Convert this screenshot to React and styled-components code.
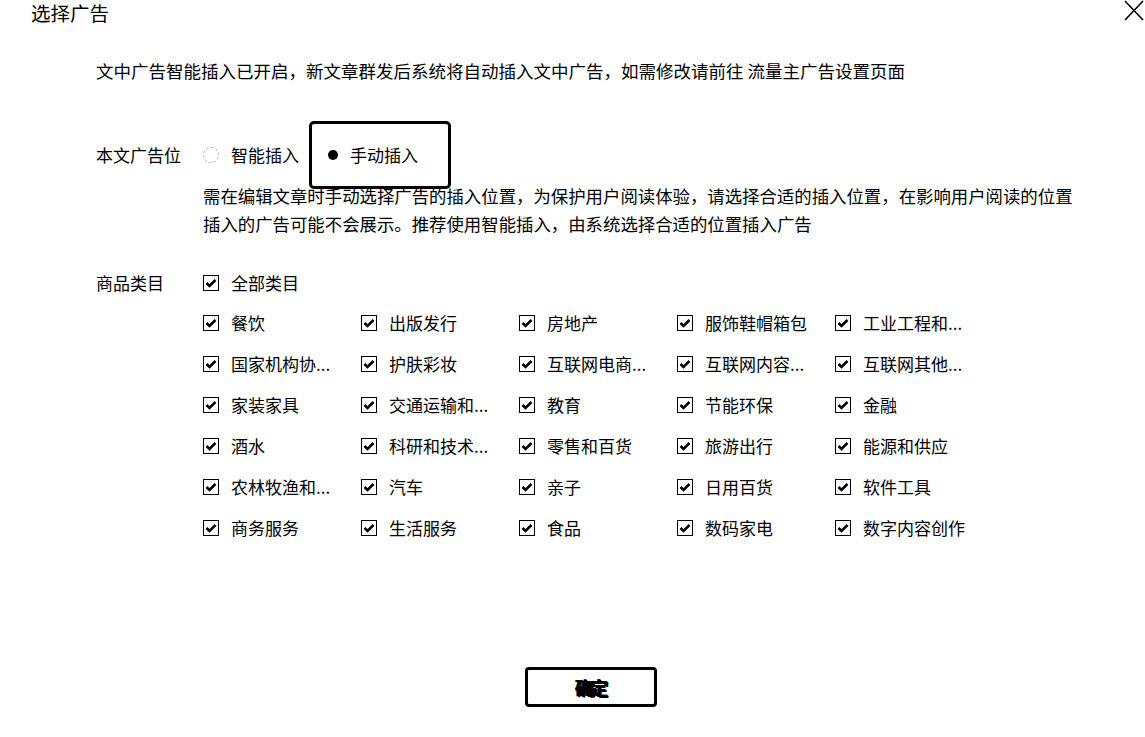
import React from 'react';
import styled, { createGlobalStyle } from 'styled-components';

const GlobalStyle = createGlobalStyle`
  html, body {
    margin: 0;
    padding: 0;
    background: #fff;
  }
  body {
    font-family: "Noto Sans CJK SC", "Noto Sans", sans-serif;
    color: #000;
  }
`;

// labels as shown in the list (long names are cut by the page)
const categories = [
  '餐饮', '出版发行', '房地产', '服饰鞋帽箱包', '工业工程和...',
  '国家机构协...', '护肤彩妆', '互联网电商...', '互联网内容...', '互联网其他...',
  '家装家具', '交通运输和...', '教育', '节能环保', '金融',
  '酒水', '科研和技术...', '零售和百货', '旅游出行', '能源和供应',
  '农林牧渔和...', '汽车', '亲子', '日用百货', '软件工具',
  '商务服务', '生活服务', '食品', '数码家电', '数字内容创作',
];

const Dialog = styled.div`
  width: 1145px;
  height: 737px;
  display: flex;
  flex-direction: column;
  box-sizing: border-box;
`;

const Header = styled.div`
  display: flex;
  align-items: center;
  justify-content: space-between;
  height: 26px;
  padding-left: 31px;
`;

const Title = styled.div`
  font-size: 19.5px;
  line-height: 26px;
`;

const Close = styled.button`
  width: 22px;
  height: 22px;
  margin-top: -4px;
  padding: 0;
  border: 0;
  background: none;
  display: flex;
`;

const Body = styled.div`
  padding-left: 96px;
  display: flex;
  flex-direction: column;
`;

const Notice = styled.p`
  margin: 31px 0 0;
  font-size: 17.5px;
  line-height: 28px;
`;

const FieldRow = styled.div`
  display: flex;
  align-items: flex-start;
  margin-top: ${(p) => p.$gap}px;
`;

const FieldLabel = styled.div`
  width: 107px;
  flex: none;
  font-size: 17px;
  line-height: 28px;
`;

const Radios = styled.div`
  display: flex;
  align-items: center;
  gap: 26px;
  height: 28px;
`;

const RadioItem = styled.label`
  position: relative;
  display: flex;
  align-items: center;
  gap: ${(p) => (p.$focused ? 9 : 12)}px;
  font-size: 17px;
  line-height: 28px;

  ${(p) =>
    p.$focused &&
    `
    &::after {
      content: '';
      position: absolute;
      left: -16px;
      right: -33px;
      top: -20px;
      bottom: -20px;
      border: 3px solid #000;
      border-radius: 5px;
    }
  `}
`;

const RadioDot = styled.span`
  width: 16px;
  height: 16px;
  box-sizing: border-box;
  border-radius: 50%;
  display: flex;
  align-items: center;
  justify-content: center;
  border: ${(p) => (p.$checked ? 'none' : '1px dashed #bbb')};

  &::before {
    content: '';
    display: ${(p) => (p.$checked ? 'block' : 'none')};
    width: 10px;
    height: 10px;
    border-radius: 50%;
    background: #000;
  }
`;

const Hint = styled.p`
  margin: 13px 0 0 107px;
  font-size: 17.4px;
  line-height: 28px;
  max-width: 878px;
`;

const Checks = styled.div`
  display: flex;
  flex-direction: column;
  gap: 12px;
`;

const Grid = styled.div`
  display: grid;
  grid-template-columns: repeat(5, 158px);
  row-gap: 13px;
`;

const CheckItem = styled.label`
  display: flex;
  align-items: center;
  gap: 12px;
  height: 28px;
  font-size: 17px;
  line-height: 28px;
  white-space: nowrap;
`;

const Box = styled.span`
  width: 16px;
  height: 16px;
  flex: none;
  box-sizing: border-box;
  border: 1px solid #000;
  display: flex;
  align-items: center;
  justify-content: center;
`;

const Footer = styled.div`
  display: flex;
  justify-content: center;
  margin-top: 125px;
  padding-left: 36px;
`;

const ConfirmButton = styled.button`
  width: 132px;
  height: 40px;
  border: 3px solid #000;
  border-radius: 4px;
  background: #fff;
  font-family: "Noto Sans CJK SC", sans-serif;
  font-size: 18px;
  font-weight: 700;
  color: #000;
  text-shadow: 1px 1px 0 #000, -1px 0 0 #000;
  letter-spacing: -3px;
`;

function Check() {
  return (
    <Box>
      <svg width="12" height="10" viewBox="0 0 12 10">
        <path d="M1.5 5 L4.5 8 L10.5 2" fill="none" stroke="#000" strokeWidth="2.6" />
      </svg>
    </Box>
  );
}

function CheckOption({ children }) {
  return (
    <CheckItem>
      <Check />
      <span>{children}</span>
    </CheckItem>
  );
}

export default function App() {
  return (
    <>
      <GlobalStyle />
      <Dialog>
        <Header>
          <Title>选择广告</Title>
          <Close aria-label="关闭">
            <svg width="22" height="22" viewBox="0 0 22 22">
              <path d="M2 1 L20 20 M20 1 L2 20" stroke="#000" strokeWidth="1.6" />
            </svg>
          </Close>
        </Header>
        <Body>
          <Notice>
            文中广告智能插入已开启，新文章群发后系统将自动插入文中广告，如需修改请前往 流量主广告设置页面
          </Notice>

          <FieldRow $gap={56}>
            <FieldLabel>本文广告位</FieldLabel>
            <Radios>
              <RadioItem>
                <RadioDot />
                智能插入
              </RadioItem>
              <RadioItem $focused>
                <RadioDot $checked />
                手动插入
              </RadioItem>
            </Radios>
          </FieldRow>
          <Hint>
            需在编辑文章时手动选择广告的插入位置，为保护用户阅读体验，请选择合适的插入位置，在影响用户阅读的位置插入的广告可能不会展示。推荐使用智能插入，由系统选择合适的位置插入广告
          </Hint>

          <FieldRow $gap={31}>
            <FieldLabel>商品类目</FieldLabel>
            <Checks>
              <CheckOption>全部类目</CheckOption>
              <Grid>
                {categories.map((c) => (
                  <CheckOption key={c}>{c}</CheckOption>
                ))}
              </Grid>
            </Checks>
          </FieldRow>
        </Body>
        <Footer>
          <ConfirmButton>确定</ConfirmButton>
        </Footer>
      </Dialog>
    </>
  );
}
